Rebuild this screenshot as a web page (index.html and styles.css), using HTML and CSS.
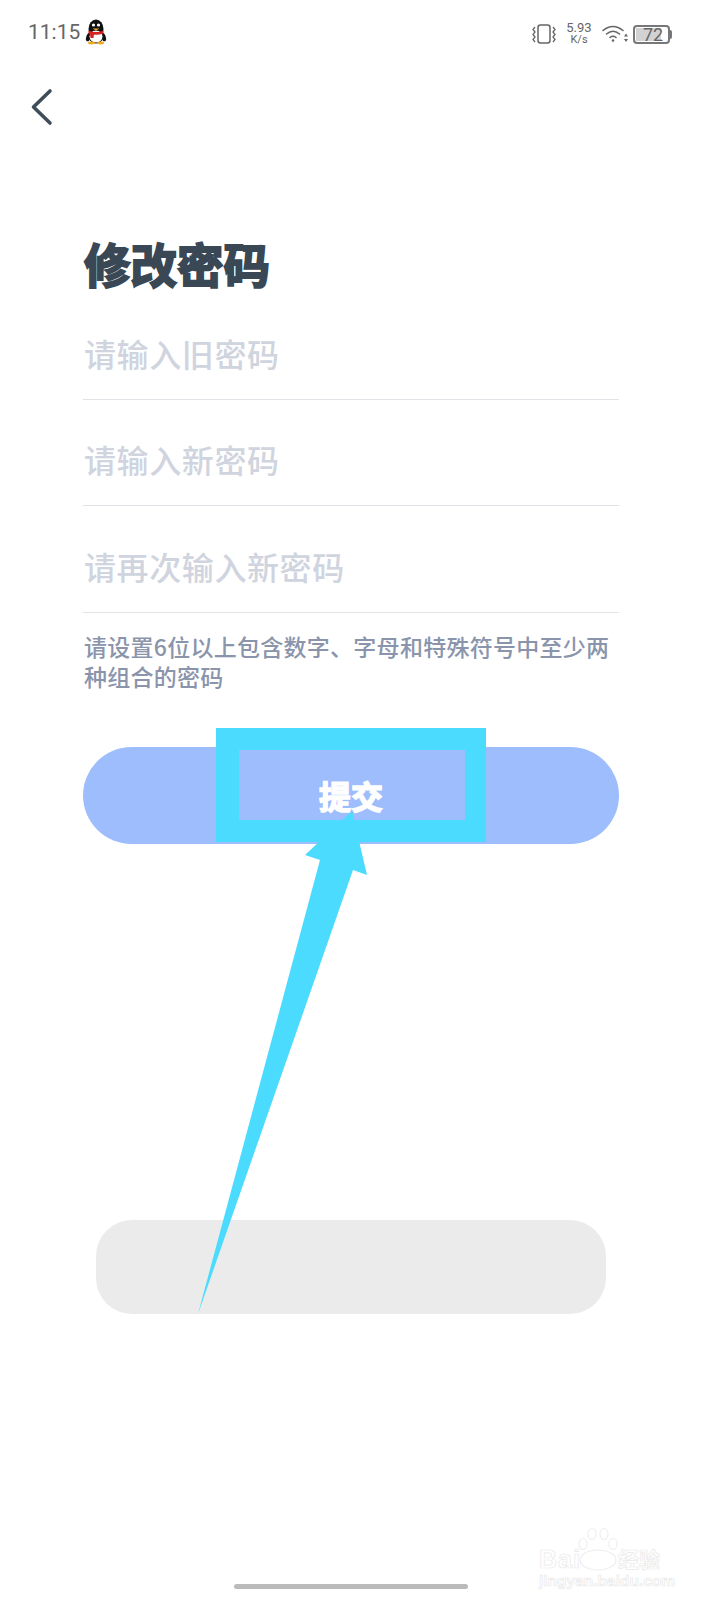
FILE: index.html
```html
<!DOCTYPE html>
<html lang="zh-CN">
<head>
<meta charset="utf-8">
<title>修改密码</title>
<link rel="stylesheet" href="styles.css">
</head>
<body>
<div class="page">
  <header class="status">
    <div class="status-left">
      <span class="time">11:15</span>
      <svg class="penguin" width="22" height="26" viewBox="0 0 22 26">
        <ellipse cx="11" cy="10" rx="7.5" ry="9.5" fill="#111"/>
        <ellipse cx="3.5" cy="18" rx="2.2" ry="4.5" fill="#111" transform="rotate(18 3.5 18)"/>
        <ellipse cx="18.5" cy="18" rx="2.2" ry="4.5" fill="#111" transform="rotate(-18 18.5 18)"/>
        <ellipse cx="11" cy="17.5" rx="7" ry="6.5" fill="#fff" stroke="#111"/>
        <ellipse cx="6.5" cy="24" rx="3.5" ry="1.4" fill="#f0a91e"/>
        <ellipse cx="15.5" cy="24" rx="3.5" ry="1.4" fill="#f0a91e"/>
        <circle cx="8.5" cy="6" r="1.6" fill="#fff"/>
        <circle cx="13.5" cy="6" r="1.6" fill="#fff"/>
        <path d="M7.5 9.5 H14.5 L11 11.5 Z" fill="#f5b21f"/>
        <path d="M3.5 11.5 Q11 14.5 18.5 11.5 L18.5 14.5 Q11 17 3.5 14.5 Z" fill="#d8201f"/>
        <path d="M5 14.5 H9 L8.5 19 H5.5 Z" fill="#d8201f"/>
      </svg>
    </div>
    <div class="status-right">
      <svg width="24" height="20" viewBox="0 0 24 20" fill="none" stroke="#666" stroke-width="1.3">
        <rect x="6" y="1" width="12" height="18" rx="2.5" stroke-width="1.5"/>
        <path d="M3 3 L1 5.5 L3 8 L1 10.5 L3 13 L1 15.5 L3 18"/>
        <path d="M21 3 L23 5.5 L21 8 L23 10.5 L21 13 L23 15.5 L21 18"/>
      </svg>
      <div class="speed"><span class="speed-num">5.93</span><span class="speed-unit">K/s</span></div>
      <svg class="wifi" width="27" height="20" viewBox="0 0 27 20" fill="none" stroke="#666" stroke-width="1.6" stroke-linecap="round">
        <path d="M1 6.5 Q11 -1.5 21 6.5"/>
        <path d="M4.5 10 Q11 4.5 17.5 10"/>
        <path d="M8 13.5 Q11 11 14 13.5"/>
        <circle cx="11" cy="16.5" r="1.3" fill="#666" stroke="none"/>
        <path d="M22 12.5 L24 9.5 L26 12.5 Z M22 15 L24 18 L26 15 Z" fill="#666" stroke="none"/>
      </svg>
      <div class="battery">
        <div class="battery-body"><span class="battery-level">72</span></div>
        <div class="battery-cap"></div>
      </div>
    </div>
  </header>

  <nav class="nav">
    <svg width="24" height="40" viewBox="0 0 24 40" fill="none" stroke="#3f4d5a" stroke-width="3.6" stroke-linecap="round" stroke-linejoin="round">
      <path d="M20 4 L3.5 20 L20 36"/>
    </svg>
  </nav>

  <main class="main">
    <h1 class="title">修改密码</h1>
    <div class="field">请输入旧密码</div>
    <div class="field">请输入新密码</div>
    <div class="field">请再次输入新密码</div>
    <p class="hint">请设置6位以上包含数字、字母和特殊符号中至少两种组合的密码</p>
    <div class="submit">提交</div>
    <div class="toast"></div>
  </main>

  <div class="home-bar"></div>

  <svg class="annotation" width="702" height="1600" viewBox="0 0 702 1600">
    <path fill="#4adbff" fill-rule="evenodd" d="M216 728 H486 V842 H216 Z M239 750 V820 H465 V750 Z"/>
    <polygon fill="#4adbff" points="352,811 367,875 353,870 198,1314 320,860 305,855"/>
  </svg>

  <div class="watermark">
    <div class="wm-top">
      <span class="wm-bai">Bai</span>
      <svg class="wm-paw" width="40" height="44" viewBox="0 0 40 44" fill="#fff" stroke="#eeeeee" stroke-width="1.2">
        <ellipse cx="20" cy="33" rx="18" ry="10"/>
        <ellipse cx="5" cy="17" rx="4" ry="5.5"/>
        <ellipse cx="14" cy="7" rx="4" ry="5.5"/>
        <ellipse cx="26" cy="7" rx="4" ry="5.5"/>
        <ellipse cx="35" cy="17" rx="4" ry="5.5"/>
      </svg>
      <span class="wm-cn">经验</span>
    </div>
    <div class="wm-url">jingyan.baidu.com</div>
  </div>
</div>
</body>
</html>
```
FILE: styles.css
```css
* { box-sizing: border-box; }
html, body { margin: 0; padding: 0; background: #fff; }
.page {
  position: relative;
  width: 702px;
  height: 1600px;
  overflow: hidden;
  font-family: "Noto Sans CJK SC", "Noto Sans", sans-serif;
}
.status {
  height: 64px;
  padding: 19px 30px 0 28px;
  display: flex;
  justify-content: space-between;
  align-items: flex-start;
}
.status-left { display: flex; align-items: center; gap: 5px; }
.time {
  font: 400 21px/26px Roboto, sans-serif;
  color: #666;
}
.status-right { display: flex; align-items: center; gap: 10px; padding-top: 3px; }
.speed { display: flex; flex-direction: column; align-items: center; width: 26px; color: #666; font-family: Roboto, sans-serif; }
.speed-num { font-size: 13px; line-height: 11px; }
.speed-unit { font-size: 11px; line-height: 13px; }
.wifi { margin-right: -6px; }
.battery { display: flex; align-items: center; }
.battery-body {
  width: 37px;
  height: 19px;
  border: 2px solid #777;
  border-radius: 4px;
  padding: 1px;
  background: #fff;
}
.battery-level {
  display: block;
  width: 25px;
  height: 13px;
  background: #d2d2d2;
  font: 400 18px/13px Roboto, sans-serif;
  color: #666;
  padding-left: 7px;
  white-space: nowrap;
}
.battery-cap { width: 2px; height: 9px; background: #777; border-radius: 0 2px 2px 0; }
.nav { height: 80px; padding: 23px 0 0 30px; }
.main { padding: 0 83px; }
.title {
  margin: 89px 0 0;
  padding-left: 1px;
  font-size: 46.5px;
  line-height: 60px;
  font-weight: 700;
  color: #3a4754;
  -webkit-text-stroke: 2px #3a4754;
}
.field {
  height: 106.5px;
  padding: 0 0 28px 1px;
  display: flex;
  align-items: flex-end;
  font-size: 32px;
  line-height: 36px;
  font-weight: 500;
  letter-spacing: 0.6px;
  color: #cfd4de;
  border-bottom: 1px solid #dfe2e6;
}
.hint {
  margin: 18px 0 0;
  padding-left: 1px;
  font-size: 23px;
  line-height: 30px;
  font-weight: 500;
  letter-spacing: 0.27px;
  color: #8a94ab;
}
.submit {
  margin-top: 56px;
  height: 97px;
  border-radius: 48.5px;
  background: #9dbdfd;
  display: flex;
  align-items: center;
  justify-content: center;
  font-size: 32px;
  font-weight: 700;
  color: #fff;
  -webkit-text-stroke: 1.5px #fff;
}
.toast {
  margin: 376px 13px 0 13px;
  height: 94px;
  border-radius: 36px;
  background: #ebebeb;
}
.home-bar {
  margin: 270px 0 0 234px;
  width: 234px;
  height: 5px;
  border-radius: 3px;
  background: #bbb;
}
.annotation { position: absolute; left: 0; top: 0; pointer-events: none; }
.watermark {
  position: absolute;
  left: 539px;
  top: 1527px;
  width: 130px;
  color: #fff;
  -webkit-text-stroke: 0.7px #e9e9e9;
}
.wm-top { display: flex; align-items: flex-end; height: 44px; }
.wm-bai { font: 700 25px/24px "Liberation Sans", sans-serif; letter-spacing: 1px; margin-right: -3px; }
.wm-paw { flex: none; }
.wm-cn { font-size: 21px; line-height: 26px; font-weight: 700; white-space: nowrap; }
.wm-url { font: 700 15.5px/16px "Liberation Sans", sans-serif; margin-top: 2px; white-space: nowrap; }
```
